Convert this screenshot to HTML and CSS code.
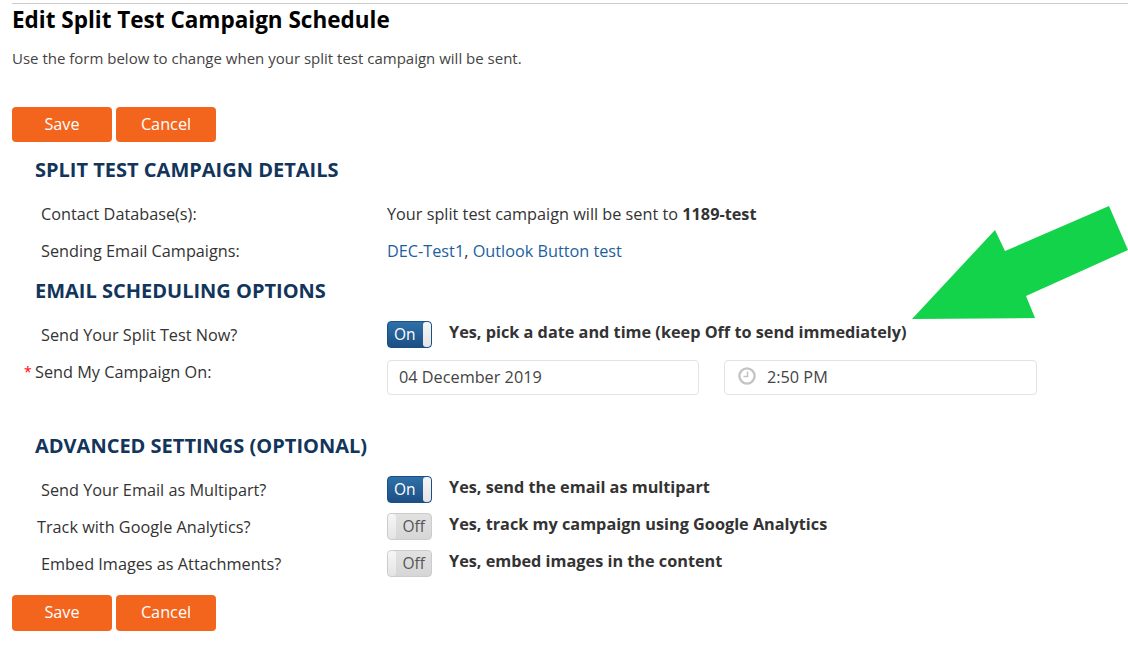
FILE: index.html
```html
<!DOCTYPE html>
<html lang="en">
<head>
<meta charset="utf-8">
<title>Edit Split Test Campaign Schedule</title>
<link rel="stylesheet" href="styles.css">
</head>
<body>
<main class="page">
  <h1 class="title">Edit Split Test Campaign Schedule</h1>
  <p class="intro">Use the form below to change when your split test campaign will be sent.</p>
  <div class="actions">
    <a class="btn">Save</a>
    <a class="btn">Cancel</a>
  </div>
  <section class="section details">
    <h2 class="heading">SPLIT TEST CAMPAIGN DETAILS</h2>
    <div class="row">
      <div class="label">Contact Database(s):</div>
      <div class="value">Your split test campaign will be sent to <b>1189-test</b></div>
    </div>
    <div class="row">
      <div class="label">Sending Email Campaigns:</div>
      <div class="value"><a class="link">DEC-Test1</a>, <a class="link">Outlook Button test</a></div>
    </div>
  </section>
  <section class="section scheduling">
    <h2 class="heading">EMAIL SCHEDULING OPTIONS</h2>
    <div class="row">
      <div class="label">Send Your Split Test Now?</div>
      <div class="value toggle-line">
        <span class="toggle on"><span class="toggle-text">On</span><span class="knob"></span></span>
        <strong class="toggle-note">Yes, pick a date and time (keep Off to send immediately)</strong>
      </div>
    </div>
    <div class="row date-row">
      <div class="label required"><span class="star">*</span>Send My Campaign On:</div>
      <div class="value inputs">
        <div class="field">04 December 2019</div>
        <div class="field time">
          <svg class="clock" viewBox="0 0 18 18" width="18" height="18" aria-hidden="true"><circle cx="9" cy="9" r="7.6" fill="none" stroke="#c4c4c4" stroke-width="2.4"/><path d="M9.5 4.5V9.6H5.5" fill="none" stroke="#c4c4c4" stroke-width="1.5"/></svg>
          <span>2:50 PM</span>
        </div>
      </div>
    </div>
  </section>
  <section class="section advanced">
    <h2 class="heading">ADVANCED SETTINGS (OPTIONAL)</h2>
    <div class="row">
      <div class="label">Send Your Email as Multipart?</div>
      <div class="value toggle-line">
        <span class="toggle on"><span class="toggle-text">On</span><span class="knob"></span></span>
        <strong class="toggle-note">Yes, send the email as multipart</strong>
      </div>
    </div>
    <div class="row">
      <div class="label tight">Track with Google Analytics?</div>
      <div class="value toggle-line">
        <span class="toggle off"><span class="knob"></span><span class="toggle-text">Off</span></span>
        <strong class="toggle-note">Yes, track my campaign using Google Analytics</strong>
      </div>
    </div>
    <div class="row">
      <div class="label">Embed Images as Attachments?</div>
      <div class="value toggle-line">
        <span class="toggle off"><span class="knob"></span><span class="toggle-text">Off</span></span>
        <strong class="toggle-note">Yes, embed images in the content</strong>
      </div>
    </div>
  </section>
  <div class="actions bottom">
    <a class="btn">Save</a>
    <a class="btn">Cancel</a>
  </div>
</main>
<svg class="arrow" viewBox="0 0 1128 656" width="1128" height="656" aria-hidden="true"><polygon points="912,319 995,230 1005,251 1109,206 1128,250 1026,296 1035,318" fill="#12d34a"/></svg>
</body>
</html>
```
FILE: styles.css
```css
* { box-sizing: border-box; }
html, body { margin: 0; padding: 0; background: #fff; }
body {
  font-family: "Open Sans", "Liberation Sans", sans-serif;
  font-size: 16.25px;
  color: #333;
  height: 656px;
  overflow: hidden;
  position: relative;
}
.page {
  margin: 3px 0 0 12px;
  border-top: 1px solid #ccc;
}
.title {
  margin: 1px 0 0;
  font-size: 22.5px;
  line-height: 30px;
  font-weight: 700;
  color: #000;
}
.intro {
  margin: 13px 0 0;
  font-size: 15px;
  line-height: 20px;
  color: #444;
}
.actions {
  display: flex;
  gap: 4px;
  margin-top: 39px;
}
.actions.bottom { margin-top: 13px; }
.btn {
  width: 100px;
  height: 35px;
  background: #f3651d;
  color: #fff;
  border-radius: 4px;
  font-size: 16.25px;
  line-height: 35px;
  text-align: center;
}
.actions.bottom .btn { height: 36px; }
.section { padding-left: 23px; }
.heading {
  margin: 0;
  font-size: 20px;
  line-height: 26px;
  font-weight: 700;
  color: #12355b;
}
.details { margin-top: 15px; }
.details .heading { margin-bottom: 12px; }
.scheduling { margin-top: 9px; }
.scheduling .heading { margin-bottom: 12px; }
.advanced { margin-top: 38px; }
.advanced .heading { margin-bottom: 12px; }
.row {
  display: grid;
  grid-template-columns: 352px 1fr;
  height: 37px;
  align-items: center;
}
.label { padding-left: 6px; color: #333; }
.label.tight { padding-left: 2px; }
.label.required { position: relative; padding-left: 0; align-self: start; margin-top: 1px; }
.star {
  position: absolute;
  left: -11px;
  top: 1px;
  color: #f00;
  font-size: 14px;
}
.value { color: #333; }
.link { color: #1c5f9f; }
.toggle-line {
  display: flex;
  align-items: flex-start;
  gap: 17px;
}
.toggle-note { font-weight: 700; color: #333; line-height: 22px; }
.toggle {
  display: flex;
  width: 45px;
  height: 27px;
  border-radius: 4px;
  overflow: hidden;
  font-size: 15.5px;
  line-height: 25px;
  flex: none;
  justify-content: space-between;
}
.toggle.on {
  background: linear-gradient(#2f70a8, #1c4f85);
  color: #fff;
  border: 1px solid #1c4f85;
}
.toggle.off {
  background: linear-gradient(#e2e2e2, #d6d6d6);
  color: #555;
  border: 1px solid #ccc;
}
.toggle-text { padding: 0 4px 0 6px; }
.toggle.off .toggle-text { padding-right: 6px; }
.knob {
  width: 8px;
  background: linear-gradient(#f6f6f6, #e4e4e4);
  border-radius: 3px;
}
.date-row { height: 35px; margin-top: 7px; }
.inputs { display: flex; gap: 25px; }
.field {
  width: 312px;
  height: 35px;
  border: 1px solid #e3e3e3;
  border-radius: 4px;
  padding: 0 11px;
  line-height: 33px;
  color: #444;
  display: flex;
  align-items: center;
}
.field.time { width: 313px; gap: 11px; padding-left: 13px; }
.clock { margin-top: -4px; flex: none; }
.arrow {
  position: absolute;
  left: 0;
  top: 0;
  pointer-events: none;
}
```
